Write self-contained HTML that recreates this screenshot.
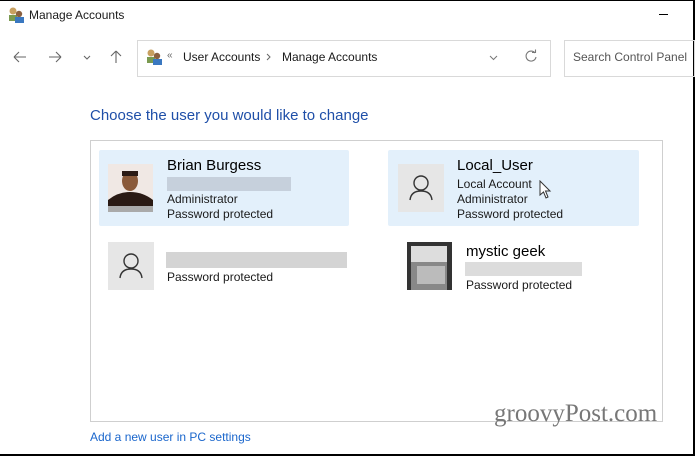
<!DOCTYPE html>
<html><head><style>
body{margin:0;width:695px;height:456px;background:#fff;position:relative;overflow:hidden;font-family:"Liberation Sans",sans-serif;color:#000}
.a{position:absolute}
.t{font-size:12px;color:#1a1a1a}
.card{position:absolute;background:#e3f0fb;border-radius:2px}
.av{position:absolute;width:46px;height:48px;background:#e6e6e6}
.blur{position:absolute;height:14px;background:#d4d4d4}
</style></head><body>
<div class="a" style="left:0;top:0;width:695px;height:1px;background:#000"></div>
<div class="a" style="left:693px;top:0;width:2px;height:456px;background:#000"></div>
<div class="a" style="left:0;top:454px;width:695px;height:2px;background:#000"></div>
<svg class="a" style="left:7px;top:6px" width="18" height="18"><circle cx="6" cy="5" r="3.5" fill="#c8a060"/><rect x="2" y="9" width="8" height="6" fill="#7a9a50"/><circle cx="12" cy="8" r="3.2" fill="#8a6040"/><rect x="8" y="11" width="9" height="6" fill="#3a78c0"/></svg>
<div class="a t" style="left:29px;top:8px;font-size:12px">Manage Accounts</div>
<div class="a" style="left:659px;top:14px;width:9px;height:1px;background:#000"></div>
<svg class="a" style="left:13px;top:50px" width="120" height="14" fill="none" stroke="#666" stroke-width="1.1"><path d="M1 7H13M1 7L6 2M1 7L6 12"/><path d="M36 7H48M48 7L43 2M48 7L43 12"/><path d="M71 6L74 9L77 6"/><path d="M103 1V13M103 1L98 6M103 1L108 6"/></svg>
<div class="a" style="left:137px;top:40px;width:414px;height:37px;border:1px solid #d9d9d9;box-sizing:border-box"></div>
<svg class="a" style="left:145px;top:48px" width="18" height="18"><circle cx="6" cy="5" r="3.5" fill="#c8a060"/><rect x="2" y="9" width="8" height="6" fill="#7a9a50"/><circle cx="12" cy="8" r="3.2" fill="#8a6040"/><rect x="8" y="11" width="9" height="6" fill="#3a78c0"/></svg>
<div class="a t" style="left:167px;top:50px;font-size:10px;color:#666">«</div>
<div class="a t" style="left:183px;top:50px">User Accounts</div>
<svg class="a" style="left:266px;top:53px" width="6" height="8" fill="none" stroke="#666"><path d="M1 1L4 4L1 7"/></svg>
<div class="a t" style="left:282px;top:50px">Manage Accounts</div>
<svg class="a" style="left:489px;top:55px" width="9" height="6" fill="none" stroke="#777"><path d="M1 1L4.5 4.5L8 1"/></svg>
<svg class="a" style="left:524px;top:49px" width="14" height="14" fill="none" stroke="#777" stroke-width="1.1"><path d="M11 4A5 5 0 1 0 12 8"/><path d="M8 3.5H11.5V0.5"/></svg>
<div class="a" style="left:564px;top:40px;width:131px;height:37px;border:1px solid #d9d9d9;box-sizing:border-box"></div>
<div class="a t" style="left:573px;top:50px;color:#555">Search Control Panel</div>
<div class="a" style="left:90px;top:107px;font-size:15px;color:#1f4fa8">Choose the user you would like to change</div>
<div class="a" style="left:90px;top:140px;width:573px;height:282px;border:1px solid #cfcfcf;box-sizing:border-box"></div>
<div class="card" style="left:99px;top:150px;width:250px;height:76px"></div>
<div class="card" style="left:388px;top:150px;width:251px;height:76px"></div>
<svg class="a" style="left:108px;top:164px" width="45" height="48"><rect width="45" height="48" fill="#f0e8e4"/><path d="M0 48 L0 36 Q10 28 22 28 Q35 28 45 36 L45 48Z" fill="#2a1a14"/><ellipse cx="22" cy="17" rx="8" ry="10" fill="#8a5a3a"/><rect x="14" y="7" width="16" height="5" fill="#2a1a14"/><rect x="0" y="42" width="45" height="6" fill="#aaa"/></svg>
<div class="a" style="left:167px;top:157px;font-size:15px">Brian Burgess</div>
<div class="blur" style="left:167px;top:177px;width:124px;background:#c6d0dc"></div>
<div class="a t" style="left:167px;top:192px">Administrator</div>
<div class="a t" style="left:167px;top:207px">Password protected</div>
<div class="av" style="left:398px;top:164px;width:46px;height:48px"></div>
<svg class="a" style="left:398px;top:164px" width="46" height="48"><circle cx="23" cy="19" r="7" fill="none" stroke="#333" stroke-width="1.4"/><path d="M12 36 Q13 27 23 27 Q33 27 34 36" fill="none" stroke="#333" stroke-width="1.4"/></svg>
<div class="a" style="left:457px;top:157px;font-size:15px">Local_User</div>
<div class="a t" style="left:457px;top:177px">Local Account</div>
<div class="a t" style="left:457px;top:192px">Administrator</div>
<div class="a t" style="left:457px;top:207px">Password protected</div>
<svg class="a" style="left:539px;top:180px" width="14" height="20"><path d="M1 1 L1 15 L4.5 12 L7 18 L9 17 L6.5 11 L11 11Z" fill="#fff" stroke="#333"/></svg>
<div class="av" style="left:108px;top:242px;width:46px;height:48px"></div>
<svg class="a" style="left:108px;top:242px" width="46" height="48"><circle cx="23" cy="19" r="7" fill="none" stroke="#333" stroke-width="1.4"/><path d="M12 36 Q13 27 23 27 Q33 27 34 36" fill="none" stroke="#333" stroke-width="1.4"/></svg>
<div class="blur" style="left:166px;top:252px;width:181px;height:16px"></div>
<div class="a t" style="left:167px;top:270px">Password protected</div>
<svg class="a" style="left:407px;top:242px" width="45" height="48"><rect width="45" height="48" fill="#333"/><rect x="4" y="4" width="36" height="44" fill="#888"/><rect x="4" y="4" width="36" height="16" fill="#ddd"/><rect x="10" y="24" width="28" height="18" fill="#bbb"/></svg>
<div class="a" style="left:466px;top:243px;font-size:15px">mystic geek</div>
<div class="blur" style="left:465px;top:262px;width:117px;height:14px;background:#dcdcdc"></div>
<div class="a t" style="left:466px;top:278px">Password protected</div>
<div class="a" style="left:90px;top:430px;font-size:12px;color:#1a66cc">Add a new user in PC settings</div>
<div class="a" style="left:494px;top:400px;font-size:25px;color:#777;font-family:'Liberation Serif',serif">groovyPost.com</div>
</body></html>
